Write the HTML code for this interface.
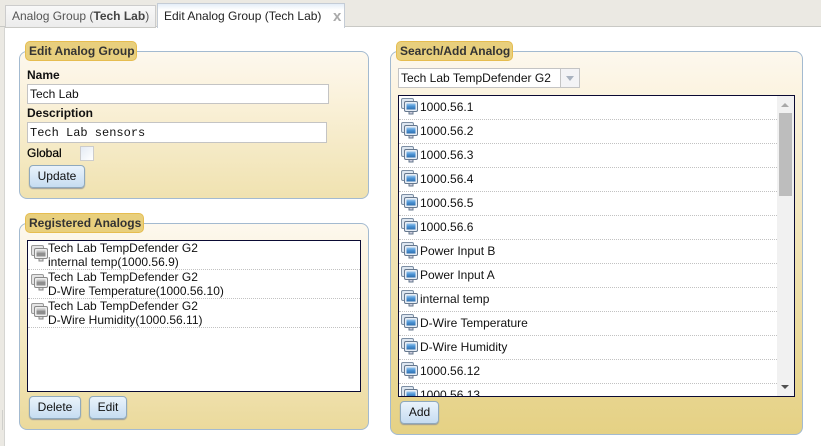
<!DOCTYPE html>
<html><head><meta charset="utf-8"><style>
html,body{margin:0;padding:0}
body{width:821px;height:446px;overflow:hidden;background:#fff;position:relative;font:12px "Liberation Sans",Arial,sans-serif;color:#111}
div,svg{position:absolute;box-sizing:border-box}
.t{white-space:nowrap;line-height:14px}
.fs{border:1px solid #a3bad0;border-radius:8px}
.lg{background:#e8cf7d;border:1px solid #e6bd50;border-radius:5px;font-weight:bold;color:#333;height:20px;line-height:18px;padding-left:3px;white-space:nowrap}
.in{background:#fff;border:1px solid #c4c4c4;padding-left:2px;color:#111;white-space:nowrap}
.btn{border:1px solid #8fa9bd;border-radius:4px;background:linear-gradient(#eaf3fb,#c6dcf1);text-align:center;line-height:20px;height:23px;box-shadow:0 1px 1px #999;color:#111}
.lb{background:#fff;border:1px solid #0a0a33;overflow:hidden}
.dot{height:0;border-top:1px dotted #c2c2c2;left:0}
</style></head><body>
<svg width="0" height="0" style="position:absolute"><defs>
<linearGradient id="sc" x1="0" y1="0" x2="0" y2="1"><stop offset="0" stop-color="#9cc8ee"/><stop offset=".45" stop-color="#4d94d6"/><stop offset="1" stop-color="#2f6fae"/></linearGradient>
<symbol id="b" viewBox="0 0 17 17"><rect x=".5" y=".5" width="12" height="10" rx="1.5" fill="#dde6f0" stroke="#7c8ea3"/><rect x="3.5" y="3.5" width="13" height="10" rx="1.5" fill="#e8eef5" stroke="#66788e"/><rect x="5.5" y="5.5" width="9" height="6" fill="url(#sc)"/><path d="M8 14v2h4v-2" fill="#ccd" stroke="#66788e"/></symbol>
<symbol id="g" viewBox="0 0 17 17"><rect x=".5" y=".5" width="12" height="10" rx="1.5" fill="#e4e4e4" stroke="#999"/><rect x="3.5" y="3.5" width="13" height="10" rx="1.5" fill="#eee" stroke="#888"/><rect x="5.5" y="5.5" width="9" height="6" fill="#8f8f8f"/><rect x="5.5" y="5.5" width="9" height="2" fill="#c4c4c4"/><path d="M8 14v2h4v-2" fill="#ddd" stroke="#888"/></symbol>
</defs></svg>

<div style="left:0;top:0;width:821px;height:27px;background:#ebe9e3;border-bottom:1px solid #c9c9c5"></div>
<div style="left:0;top:27px;width:5px;height:419px;background:#ebe9e3;border-right:1px solid #d5d5d2"></div>
<div style="left:2px;top:410px;width:1px;height:20px;background:#cfcfcb"></div>
<div style="left:5px;top:5px;width:151px;height:23px;background:linear-gradient(#f8f8f8,#ececec);border:1px solid #ccc;border-bottom:1px solid #c9c9c5;color:#555"><div class="t" style="left:6px;top:3px">Analog Group (<b style="font-weight:bold;color:#444">Tech Lab</b>)</div></div>
<div style="left:157px;top:3px;width:188px;height:25px;background:linear-gradient(#e4eef8,#fff 25%);border:1px solid #c4ccd6;border-bottom:0"><div class="t" style="left:6px;top:5px;color:#222">Edit Analog Group (Tech Lab)</div><div class="t" style="left:175px;top:6px;font-weight:bold;font-size:15px;color:#aaa">x</div></div>

<div class="fs" style="left:19px;top:51px;width:350px;height:148px;background:linear-gradient(#fdf8ee,#fbf3df 25%,#f0e2b0)"></div>
<div class="lg" style="left:25px;top:41px;width:112px">Edit Analog Group</div>
<div class="t" style="left:27px;top:68px;font-weight:bold">Name</div>
<div class="in" style="left:27px;top:84px;width:302px;height:20px;line-height:18px">Tech Lab</div>
<div class="t" style="left:27px;top:106px;font-weight:bold">Description</div>
<div class="in" style="left:27px;top:122px;width:300px;height:21px;line-height:21px;font-family:'Liberation Mono',monospace">Tech Lab sensors</div>
<div class="t" style="left:27px;top:146px;color:#000;-webkit-text-stroke:.2px #000">Global</div>
<div style="left:80px;top:146px;width:14px;height:15px;background:linear-gradient(135deg,#e4ebf4,#fff);border:1px solid #ccc"></div>
<div class="btn" style="left:29px;top:165px;width:56px">Update</div>

<div class="fs" style="left:19px;top:223px;width:350px;height:207px;background:linear-gradient(#fdf8ee,#fbf3df 20%,#ebda9c)"></div>
<div class="lg" style="left:25px;top:213px;width:119px">Registered Analogs</div>
<div class="lb" style="left:27px;top:240px;width:334px;height:152px">
<svg style="left:3px;top:4px" width="17" height="17"><use href="#g"/></svg>
<div class="t" style="left:20px;top:0">Tech Lab TempDefender G2</div><div class="t" style="left:20px;top:14px">internal temp(1000.56.9)</div>
<div class="dot" style="top:28px;width:332px"></div>
<svg style="left:3px;top:33px" width="17" height="17"><use href="#g"/></svg>
<div class="t" style="left:20px;top:29px">Tech Lab TempDefender G2</div><div class="t" style="left:20px;top:43px">D-Wire Temperature(1000.56.10)</div>
<div class="dot" style="top:57px;width:332px"></div>
<svg style="left:3px;top:62px" width="17" height="17"><use href="#g"/></svg>
<div class="t" style="left:20px;top:58px">Tech Lab TempDefender G2</div><div class="t" style="left:20px;top:72px">D-Wire Humidity(1000.56.11)</div>
<div class="dot" style="top:86px;width:332px"></div>
</div>
<div class="btn" style="left:29px;top:396px;width:52px">Delete</div>
<div class="btn" style="left:89px;top:396px;width:38px">Edit</div>

<div class="fs" style="left:390px;top:51px;width:413px;height:384px;background:linear-gradient(#fdf8ee,#fbf3df 12%,#e5d184)"></div>
<div class="lg" style="left:396px;top:41px;width:117px">Search/Add Analog</div>
<div class="in" style="left:398px;top:68px;width:182px;height:20px;line-height:18px">Tech Lab TempDefender G2
<div style="left:161px;top:0;width:19px;height:18px;background:#f3f3f5;border-left:1px solid #c4c4c4"></div>
<div style="left:167px;top:7px;width:0;height:0;border:4px solid transparent;border-top:5px solid #a9b2bf;border-bottom:0"></div>
</div>
<div class="lb" style="left:398px;top:95px;width:397px;height:302px">
<div style="left:378px;top:0;width:17px;height:300px;background:#f1f1f1"></div>
<div style="left:380px;top:17px;width:13px;height:83px;background:#bdbdbd"></div>
<div style="left:382px;top:7px;width:0;height:0;border:4px solid transparent;border-bottom:4px solid #a8a8a8;border-top:0"></div>
<div style="left:382px;top:289px;width:0;height:0;border:4px solid transparent;border-top:4px solid #505050;border-bottom:0"></div>

<svg style="left:2px;top:2px" width="17" height="17"><use href="#b"/></svg><div class="t" style="left:21px;top:4px">1000.56.1</div><div class="dot" style="top:23px;width:378px"></div>
<svg style="left:2px;top:26px" width="17" height="17"><use href="#b"/></svg><div class="t" style="left:21px;top:28px">1000.56.2</div><div class="dot" style="top:47px;width:378px"></div>
<svg style="left:2px;top:50px" width="17" height="17"><use href="#b"/></svg><div class="t" style="left:21px;top:52px">1000.56.3</div><div class="dot" style="top:71px;width:378px"></div>
<svg style="left:2px;top:74px" width="17" height="17"><use href="#b"/></svg><div class="t" style="left:21px;top:76px">1000.56.4</div><div class="dot" style="top:95px;width:378px"></div>
<svg style="left:2px;top:98px" width="17" height="17"><use href="#b"/></svg><div class="t" style="left:21px;top:100px">1000.56.5</div><div class="dot" style="top:119px;width:378px"></div>
<svg style="left:2px;top:122px" width="17" height="17"><use href="#b"/></svg><div class="t" style="left:21px;top:124px">1000.56.6</div><div class="dot" style="top:143px;width:378px"></div>
<svg style="left:2px;top:146px" width="17" height="17"><use href="#b"/></svg><div class="t" style="left:21px;top:148px">Power Input B</div><div class="dot" style="top:167px;width:378px"></div>
<svg style="left:2px;top:170px" width="17" height="17"><use href="#b"/></svg><div class="t" style="left:21px;top:172px">Power Input A</div><div class="dot" style="top:191px;width:378px"></div>
<svg style="left:2px;top:194px" width="17" height="17"><use href="#b"/></svg><div class="t" style="left:21px;top:196px">internal temp</div><div class="dot" style="top:215px;width:378px"></div>
<svg style="left:2px;top:218px" width="17" height="17"><use href="#b"/></svg><div class="t" style="left:21px;top:220px">D-Wire Temperature</div><div class="dot" style="top:239px;width:378px"></div>
<svg style="left:2px;top:242px" width="17" height="17"><use href="#b"/></svg><div class="t" style="left:21px;top:244px">D-Wire Humidity</div><div class="dot" style="top:263px;width:378px"></div>
<svg style="left:2px;top:266px" width="17" height="17"><use href="#b"/></svg><div class="t" style="left:21px;top:268px">1000.56.12</div><div class="dot" style="top:287px;width:378px"></div>
<svg style="left:2px;top:290px" width="17" height="17"><use href="#b"/></svg><div class="t" style="left:21px;top:292px">1000.56.13</div>
</div>
<div class="btn" style="left:400px;top:401px;width:39px">Add</div>
</body></html>
